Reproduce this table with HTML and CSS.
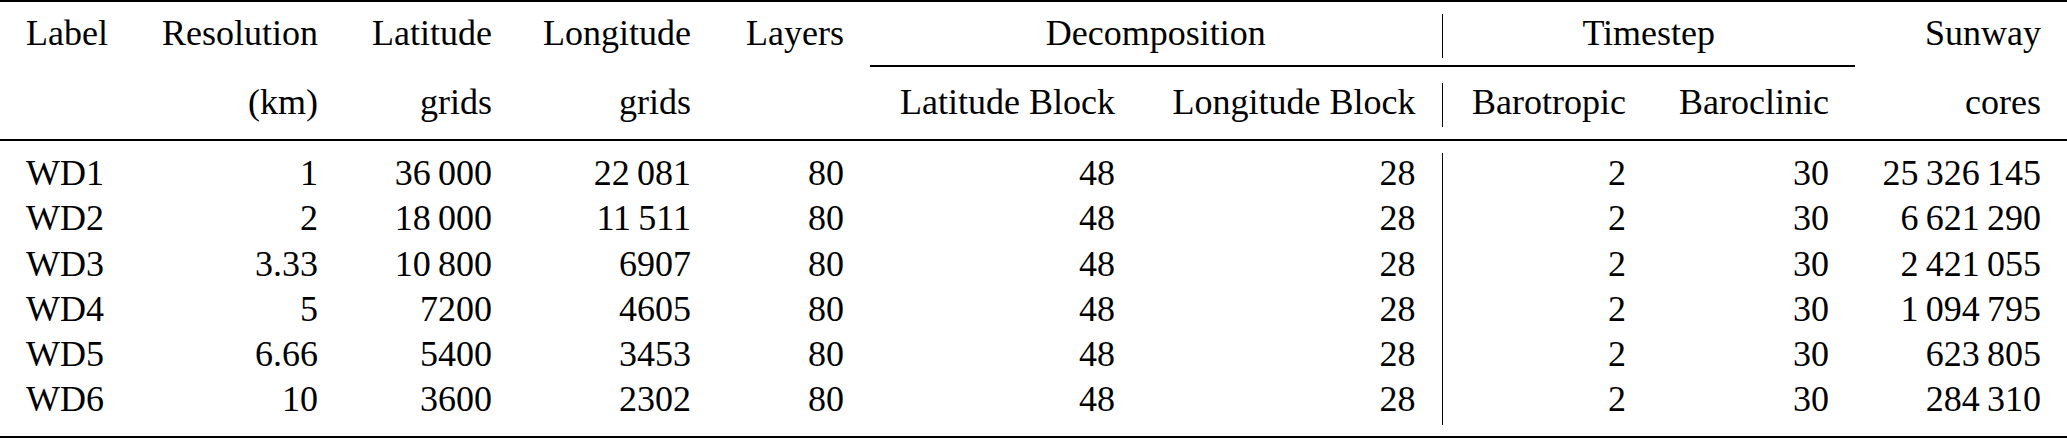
FILE: index.html
```html
<!DOCTYPE html>
<html lang="en">
<head>
  <meta charset="UTF-8">
  <title>Configurations</title>
  <link rel="stylesheet" href="styles.css">
</head>
<body>

  <table class="runs">
    <colgroup>
      <col class="w-label">
      <col class="w-res">
      <col class="w-lat">
      <col class="w-lon">
      <col class="w-layers">
      <col class="w-latblock">
      <col class="w-lonblock">
      <col class="w-baro">
      <col class="w-clin">
      <col class="w-cores">
    </colgroup>

    <thead>
      <!-- toprule -->
      <tr class="rule top"><td colspan="10"><div class="line"></div></td></tr>

      <tr class="head">
        <th class="left">Label</th>
        <th>Resolution</th>
        <th>Latitude</th>
        <th>Longitude</th>
        <th>Layers</th>
        <th colspan="2" class="group sep">Decomposition</th>
        <th colspan="2" class="group">Timestep</th>
        <th>Sunway</th>
      </tr>

      <!-- cmidrule 6-9 -->
      <tr class="rule cmid">
        <td colspan="5"></td>
        <td colspan="4"><div class="line"></div></td>
        <td></td>
      </tr>

      <tr class="head">
        <th></th>
        <th>(km)</th>
        <th>grids</th>
        <th>grids</th>
        <th></th>
        <th>Latitude Block</th>
        <th class="sep">Longitude Block</th>
        <th>Barotropic</th>
        <th>Baroclinic</th>
        <th>cores</th>
      </tr>

      <!-- midrule -->
      <tr class="rule mid"><td colspan="10"><div class="line"></div></td></tr>
    </thead>

    <tbody>
      <tr>
        <td class="left">WD1</td><td>1</td><td>36&thinsp;000</td><td>22&thinsp;081</td><td>80</td>
        <td>48</td><td class="sep">28</td><td>2</td><td>30</td><td>25&thinsp;326&thinsp;145</td>
      </tr>
      <tr>
        <td class="left">WD2</td><td>2</td><td>18&thinsp;000</td><td>11&thinsp;511</td><td>80</td>
        <td>48</td><td class="sep">28</td><td>2</td><td>30</td><td>6&thinsp;621&thinsp;290</td>
      </tr>
      <tr>
        <td class="left">WD3</td><td>3.33</td><td>10&thinsp;800</td><td>6907</td><td>80</td>
        <td>48</td><td class="sep">28</td><td>2</td><td>30</td><td>2&thinsp;421&thinsp;055</td>
      </tr>
      <tr>
        <td class="left">WD4</td><td>5</td><td>7200</td><td>4605</td><td>80</td>
        <td>48</td><td class="sep">28</td><td>2</td><td>30</td><td>1&thinsp;094&thinsp;795</td>
      </tr>
      <tr>
        <td class="left">WD5</td><td>6.66</td><td>5400</td><td>3453</td><td>80</td>
        <td>48</td><td class="sep">28</td><td>2</td><td>30</td><td>623&thinsp;805</td>
      </tr>
      <tr>
        <td class="left">WD6</td><td>10</td><td>3600</td><td>2302</td><td>80</td>
        <td>48</td><td class="sep">28</td><td>2</td><td>30</td><td>284&thinsp;310</td>
      </tr>
    </tbody>

    <tfoot>
      <!-- bottomrule -->
      <tr class="rule bottom"><td colspan="10"><div class="line"></div></td></tr>
    </tfoot>
  </table>

</body>
</html>
```

FILE: styles.css
```css
/* Page */
body {
  margin: 0;
  background: #fff;
  color: #000;
  font-family: "Liberation Serif", "Times New Roman", serif;
}

/* Table */
.runs {
  width: 2067px;
  table-layout: fixed;
  border-collapse: collapse;
  font-size: 36px;
}

.w-label { width: 133px; }
.w-res { width: 211px; }
.w-lat { width: 174px; }
.w-lon { width: 199px; }
.w-layers { width: 153px; }
.w-latblock { width: 271px; }
.w-lonblock { width: 301px; }
.w-baro { width: 210px; }
.w-clin { width: 203px; }
.w-cores { width: 212px; }

.runs th,
.runs td {
  padding: 0 26px 0 0;
  text-align: right;
  font-weight: normal;
  white-space: nowrap;
  vertical-align: top;
}

.runs th.left,
.runs td.left {
  text-align: left;
  padding-left: 26px;
  padding-right: 0;
}

.runs th.group {
  text-align: center;
  padding-right: 0;
}

/* vertical rule between decomposition and timestep */
.runs .sep {
  border-right: 1px solid #000;
}

/* Rows */
.runs .head th {
  line-height: 39px;
  padding-bottom: 5px;
}

.runs tbody td {
  line-height: 40px;
  padding-bottom: 5.3px;
}

/* booktabs-like rules */
.runs .rule td {
  padding: 0;
  line-height: 0;
}

.line {
  height: 2px;
  background: #000;
}

.runs .rule.top td { padding-bottom: 12px; }
.runs .rule.cmid td { padding: 7px 0 16px; }
.runs .rule.mid td { padding: 12px 0; }
.runs .rule.bottom td { padding-top: 11px; }
```
